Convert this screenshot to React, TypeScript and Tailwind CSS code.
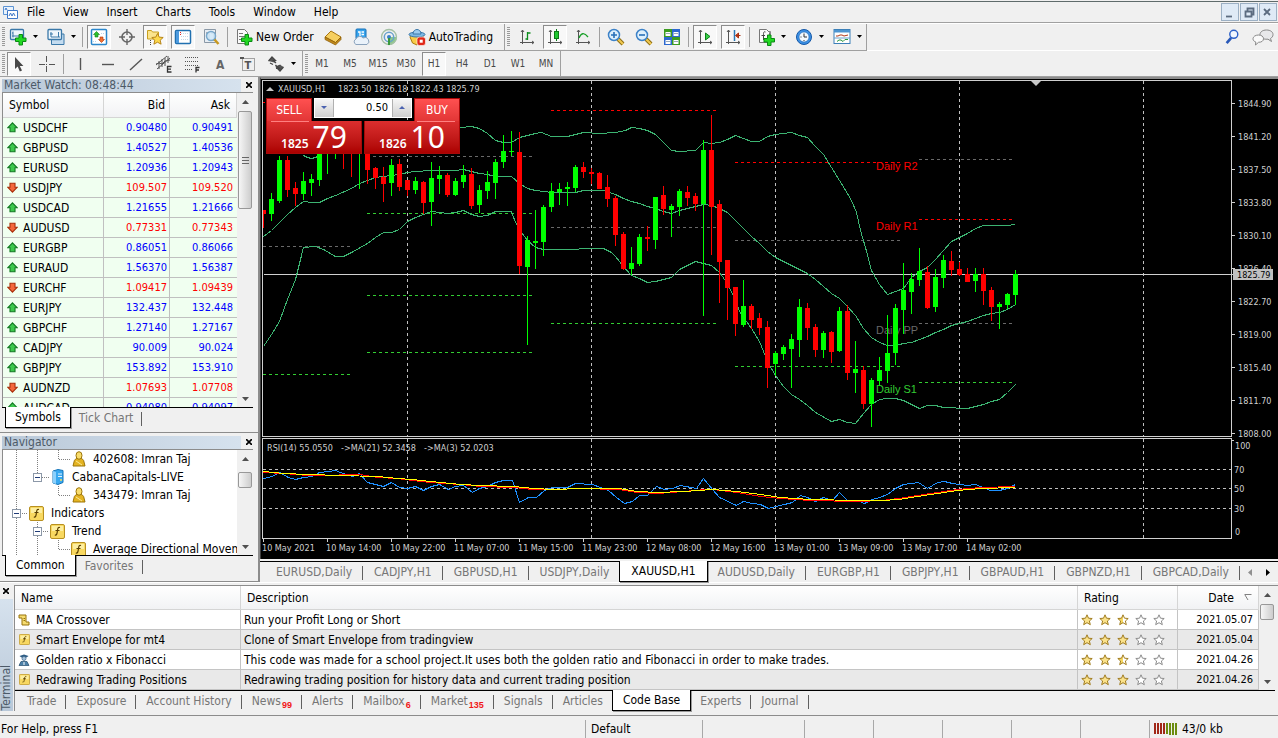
import type { ReactNode } from "react";

/* ---------- chart data ---------- */

type Candle = [up: number, bodyTop: number, bodyBottom: number, high: number, low: number];

const candles: Candle[] = [
  [0, 210, 214, 210, 228], [1, 199, 214, 193, 221], [1, 160, 201, 156, 203], [0, 160, 190, 156, 197],
  [0, 188, 194, 182, 206], [1, 181, 194, 172, 200], [1, 179, 183, 174, 196], [1, 150, 180, 150, 186],
  [1, 140, 150, 140, 174], [1, 140, 150, 140, 159], [0, 140, 150, 140, 169], [0, 140, 150, 140, 177],
  [1, 140, 150, 140, 189], [0, 150, 170, 150, 184], [0, 168, 178, 167, 189], [0, 177, 184, 167, 202],
  [1, 165, 183, 159, 196], [0, 164, 187, 159, 191], [0, 180, 190, 180, 196], [1, 181, 190, 177, 194],
  [0, 182, 203, 181, 214], [1, 178, 202, 162, 226], [1, 175, 179, 166, 194], [0, 175, 195, 173, 197],
  [1, 181, 195, 178, 196], [1, 175, 182, 165, 188], [0, 174, 206, 168, 209], [1, 190, 205, 185, 213],
  [1, 182, 191, 171, 199], [1, 162, 183, 159, 199], [1, 151, 162, 135, 168], [1, 151, 152, 131, 156],
  [0, 152, 266, 132, 274], [1, 240, 267, 236, 345], [1, 241, 243, 210, 269], [1, 207, 242, 205, 256],
  [1, 191, 207, 183, 212], [1, 189, 192, 183, 205], [1, 187, 189, 182, 206], [1, 167, 188, 165, 192],
  [0, 167, 172, 162, 178], [0, 172, 174, 168, 184], [0, 173, 189, 172, 189], [0, 187, 199, 175, 207],
  [0, 198, 235, 196, 246], [0, 234, 269, 232, 270], [1, 263, 269, 247, 275], [1, 237, 264, 234, 266],
  [0, 237, 239, 226, 251], [1, 197, 240, 197, 249], [0, 195, 209, 186, 215], [1, 206, 210, 204, 237],
  [1, 191, 207, 189, 216], [0, 192, 198, 186, 206], [0, 196, 204, 193, 211], [1, 150, 204, 140, 316],
  [0, 150, 207, 115, 255], [0, 204, 262, 200, 303], [0, 260, 288, 260, 320], [0, 287, 324, 287, 336],
  [1, 306, 325, 280, 327], [0, 306, 320, 304, 329], [0, 318, 328, 313, 335], [0, 327, 368, 321, 388],
  [1, 353, 364, 351, 376], [1, 347, 354, 345, 360], [1, 339, 349, 334, 388], [1, 307, 340, 299, 357],
  [0, 308, 328, 303, 340], [0, 327, 350, 324, 357], [1, 333, 350, 331, 358], [0, 332, 352, 331, 363],
  [1, 311, 351, 307, 352], [0, 311, 373, 305, 380], [1, 369, 373, 341, 393], [0, 370, 404, 366, 409],
  [1, 380, 404, 378, 427], [1, 370, 381, 357, 386], [1, 353, 371, 315, 383], [1, 308, 353, 304, 365],
  [1, 290, 310, 263, 334], [1, 279, 292, 273, 314], [1, 271, 280, 248, 286], [0, 272, 308, 266, 309],
  [1, 277, 307, 269, 312], [1, 260, 278, 255, 288], [0, 261, 270, 251, 276], [0, 269, 275, 262, 276],
  [0, 274, 282, 268, 282], [1, 274, 281, 268, 292], [0, 274, 291, 268, 305], [0, 290, 307, 287, 321],
  [1, 304, 307, 302, 329], [1, 294, 305, 293, 309], [1, 274, 295, 270, 305],
];

const bandHidden = "303,155 307,157 311,158 315,157 319,155";
const bandUpper =
  "455,128 461,127 471,126 479,128 487,133 495,140 503,142 511,142 519,137 527,135 535,133 541,132 551,136 567,136 583,132 599,133 615,132 625,130 631,127 639,128 647,130 655,134 663,142 671,150 679,151 695,150 703,142 711,143 719,142 727,139 735,135 743,138 751,141 759,141 767,136 775,134 791,132 799,135 807,137 815,146 823,154 831,167 839,180 847,193 851,200 856,212 860,230 865,247 871,270 879,284 887,294 895,291 903,288 911,277 919,271 927,267 935,259 943,250 951,241 959,237 967,233 975,228 983,225 1007,225 1015,224";
const bandMiddle =
  "263,236 271,230 279,222 287,214 295,207 303,201 311,202 319,202 327,198 335,195 351,188 359,183 367,180 375,177 383,176 391,175 399,174 407,172 415,171 431,170 455,170 463,169 471,171 479,173 487,174 495,176 511,176 519,183 527,188 535,190 543,191 551,192 575,192 583,190 603,190 615,194 623,198 631,201 639,203 647,206 655,208 663,211 671,213 679,210 695,206 703,204 711,205 719,208 727,212 735,220 743,228 751,236 759,243 767,251 775,257 783,261 791,265 799,269 807,273 815,279 823,286 831,293 839,298 847,306 855,315 863,328 871,337 879,342 887,345 895,345 903,343 911,342 919,339 927,336 935,332 943,329 951,325 959,323 967,321 975,318 983,315 991,313 999,312 1007,309 1015,304";
const bandLower =
  "263,346 271,334 279,321 287,299 295,279 303,247 315,246 323,249 335,256 343,256 351,252 367,243 375,237 383,232 391,232 399,229 407,221 415,217 423,214 431,211 447,213 455,212 463,210 471,214 479,216 487,215 495,211 511,211 515,222 521,232 527,240 535,247 543,249 575,249 583,248 603,248 611,252 615,256 623,266 631,275 639,278 647,282 655,281 671,277 679,269 695,261 711,265 719,272 727,283 735,300 739,311 751,328 759,341 767,361 775,375 783,386 791,394 799,399 807,405 815,412 831,421 839,419 847,422 855,423 863,413 871,404 879,399 887,398 895,398 903,400 911,404 919,408 927,405 935,405 943,407 967,408 975,406 983,404 991,401 999,399 1007,392 1015,384";

const rsi =
  "263,478 272,476 279,472 288,477 295,479 303,477 312,476 319,472 328,471 335,470 340,472 352,476 359,473 367,482 375,484 383,486 391,482 399,487 407,488 415,486 423,490 431,486 439,484 448,489 455,486 463,485 472,492 479,488 487,486 495,482 503,480 512,480 519,502 528,497 536,497 544,490 552,487 567,487 575,483 592,484 608,490 616,497 624,503 632,501 639,495 647,495 656,486 664,489 672,488 680,485 696,488 703,478 712,489 719,497 736,505 743,501 752,503 760,504 768,508 775,506 784,504 792,502 800,495 807,497 815,501 823,497 832,500 839,492 847,500 857,500 864,503 872,499 879,497 887,494 895,488 903,484 918,482 927,488 937,482 944,481 952,483 967,485 975,484 990,490 999,490 1007,488 1015,484";
const maSlow =
  "263,471 283,473 308,474 340,475 377,476 397,478 412,479 430,481 460,484 480,485 513,486 533,488 553,489 580,488 618,488 637,491 657,492 683,491 712,489 737,491 760,494 780,497 810,499 857,500 882,500 898,499 917,496 937,493 957,490 980,488 1015,487";
const maFast =
  "263,472 283,473 308,475 332,475 345,474 360,474 377,477 397,478 412,480 430,482 460,484 480,486 513,487 533,489 553,489 580,488 618,489 637,492 657,493 683,491 705,489 712,489 737,492 760,496 780,498 810,500 857,501 882,500 898,498 917,495 937,492 957,489 980,487 1015,486";

type Level = [x1: number, x2: number, y: number, color: string];
const RED = "#ff0000", LIME = "#32cd32", DIM = "#696969";
const levels: Level[] = [
  [263, 265, 102, RED], [551, 716, 110, RED], [735, 900, 162, RED], [919, 1013, 219, RED],
  [919, 1013, 159, DIM], [263, 350, 246, DIM], [367, 532, 156, DIM], [551, 716, 227, DIM],
  [735, 900, 240, DIM], [919, 1013, 323, DIM], [263, 350, 374, LIME], [367, 532, 213, LIME],
  [367, 532, 295, LIME], [367, 532, 352, LIME], [551, 716, 323, LIME], [735, 900, 366, LIME],
  [919, 1013, 382, LIME],
];

const prices = ["1844.90", "1841.20", "1837.50", "1833.80", "1830.10", "1826.40", "1822.70", "1819.00", "1815.40", "1811.70", "1808.00"];
const times = ["10 May 2021", "10 May 14:00", "10 May 22:00", "11 May 07:00", "11 May 15:00", "11 May 23:00", "12 May 08:00", "12 May 16:00", "13 May 01:00", "13 May 09:00", "13 May 17:00", "14 May 02:00"];
const pivots: [string, number, string][] = [["Daily R2", 170, RED], ["Daily R1", 230, RED], ["Daily PP", 334, DIM], ["Daily S1", 393, LIME]];

function Chart() {
  return (
    <svg viewBox="261 79 1017 480" width="1017" height="480" className="block shrink-0" fontFamily="DejaVu Sans Condensed, Tahoma, sans-serif" fontSize="9" fill="#d0d0d0" role="img" aria-label="XAUUSD H1 chart">
      <g shapeRendering="crispEdges" fill="none" stroke="#c0c0c0">
        {[407, 591, 775, 959, 1143].map((x) => (
          <g key={x} strokeDasharray="3 3">
            <path d={`M${x + 0.5} 81V436`} />
            <path d={`M${x + 0.5} 439V538`} />
          </g>
        ))}
        {levels.map(([x1, x2, y, c]) => (
          <path key={`${x1}-${y}`} d={`M${x1} ${y + 0.5}H${x2}`} stroke={c} strokeDasharray="3 3" />
        ))}
        <path d="M263 469.5H1232M263 488.5H1232M263 508.5H1232" strokeDasharray="3 3" />
      </g>
      <g fontFamily="Liberation Sans, Arial, sans-serif" fontSize="11">
        {pivots.map(([t, y, c]) => (
          <text key={t} x="876" y={y} fill={c}>{t}</text>
        ))}
      </g>
      <g shapeRendering="crispEdges" fill="none" strokeWidth="1" transform="translate(0.5 0.5)">
        <path d="M263 274H1232" stroke="#d0d0d0" />
        <g stroke="#3cb371">
          <polyline points={bandHidden} />
          <polyline points={bandUpper} />
          <polyline points={bandMiddle} />
          <polyline points={bandLower} />
        </g>
      </g>
      <g shapeRendering="crispEdges">
        {candles.map(([up, t, b, h, l], i) => (
          <g key={i} fill={up ? "#00ff00" : "#ff0000"}>
            <rect x={263 + i * 8} y={h} width="1" height={l - h} />
            <rect x={i ? 261 + i * 8 : 263} y={t} width={i ? 5 : 3} height={Math.max(1, b - t)} />
          </g>
        ))}
      </g>
      <g fill="none" shapeRendering="crispEdges" transform="translate(0.5 0.5)">
        <polyline points={rsi} stroke="#1e90ff" />
        <polyline points={maFast} stroke="#ff0000" />
        <polyline points={maSlow} stroke="#ffff00" />
      </g>
      <g shapeRendering="crispEdges" fill="none" stroke="#d0d0d0">
        <path d="M262.5 80.5H1231.5V436.5H262.5ZM262.5 438.5H1231.5V538.5H262.5Z" />
        {prices.map((p, i) => <path key={p} d={`M1232 ${103.5 + i * 33}h3`} />)}
        {times.map((t, i) => <path key={t} d={`M${263.5 + i * 64} 539v3`} />)}
        <path d="M1232 440.5h2" />
      </g>
      <path d="M1031 81h10l-5 5z" fill="#c8c8c8" />
      <path d="M266 91l4-4 4 4z" fill="#c8c8c8" />
      <text y="92"><tspan x="278">XAUUSD,H1</tspan><tspan x="338">1823.50 1826.18 1822.43 1825.79</tspan></text>
      <text y="451"><tspan x="267">RSI(14) 55.0550</tspan><tspan x="341">-&gt;MA(21) 52.3458</tspan><tspan x="424">-&gt;MA(3) 52.0203</tspan></text>
      {prices.map((p, i) => <text key={p} x="1238" y={107 + i * 33}>{p}</text>)}
      <rect x="1233" y="269" width="40" height="11" fill="#c0c0c0" />
      <text x="1237" y="278" fill="#000">1825.79</text>
      <text x="1235" y="449">100</text>
      <text x="1234" y="473">70</text>
      <text x="1234" y="492">50</text>
      <text x="1234" y="512">30</text>
      <text x="1235" y="535">0</text>
      {times.map((t, i) => <text key={t} x={262 + i * 64} y="551">{t}</text>)}
    </svg>
  );
}

function TradePanel() {
  const red = "border border-[#a80808] text-white";
  return (
    <div className="absolute left-[5px] top-[19px] w-[194px]">
      <div className="flex justify-between">
        <button className={`${red} h-[23px] w-[46px] border-b-0 bg-linear-to-b from-[#ff5050] to-[#e23636]`}>SELL</button>
        <div className="flex h-5 w-[98px] border border-white bg-white">
          <button aria-label="Decrease volume" className="flex w-[18px] items-center justify-center bg-linear-to-b from-[#f6f6f6] to-[#cfcfcf]"><svg width="6" height="4"><path d="M0 0h6L3 3z" fill="#4b62b0" /></svg></button>
          <input aria-label="Volume" defaultValue="0.50" className="min-w-0 flex-1 border-x border-[#b0b0b0] bg-white pr-1 text-right text-[11px] text-black" />
          <button aria-label="Increase volume" className="flex w-[18px] items-center justify-center bg-linear-to-b from-[#f6f6f6] to-[#cfcfcf]"><svg width="6" height="4"><path d="M0 3h6L3 0z" fill="#4b62b0" /></svg></button>
        </div>
        <button className={`${red} h-[23px] w-[46px] border-b-0 bg-linear-to-b from-[#ff5050] to-[#e23636]`}>BUY</button>
      </div>
      <div className="flex justify-between font-['Noto_Sans',sans-serif]">
        {[["1825", "79"], ["1826", "10"]].map(([a, b], i) => (
          <button key={a} className={`${red} relative flex h-[33px] w-24 items-end justify-center gap-1 border-t-0 bg-linear-to-b from-[#dc2e2e] to-[#ac0000]`}>
            <span className={i ? "absolute right-1 top-0 h-px w-[38px] bg-[#ff8080]" : "absolute left-1 top-0 h-px w-[38px] bg-[#ff8080]"} />
            <span className="text-xs leading-[18px] font-semibold">{a}</span>
            <span className="text-[30px] leading-[32px]">{b}</span>
          </button>
        ))}
      </div>
    </div>
  );
}

/* ---------- icons ---------- */

function Ico({ children, s = 18 }: { children: ReactNode; s?: number }) {
  return <svg width={s} height={s} viewBox="0 0 18 18" fill="none" aria-hidden="true" className="shrink-0">{children}</svg>;
}
const Plus = ({ x = 0, y = 0 }) => (
  <path transform={`translate(${x} ${y})`} d="M4 .5h3.500v3.500h3.500v3.500h-3.500v3.500H4V7.500H.5V4H4z" fill="#22d822" stroke="#0a8a14" />
);
const Axes = () => <path d="M4.500 2v14M2 14.500h14M3 4l1.500-2L6 4M14 13l2 1.500-2 1.500" stroke="#555" />;
const Handle = () => (
  <>
    <path d="M11 11l5 5" stroke="#8a6a10" strokeWidth="4" />
    <path d="M11 11l5 5" stroke="#f0c850" strokeWidth="2.200" />
  </>
);
const Lens = () => <circle cx="7" cy="7" r="5.500" fill="#dff0fc" stroke="#3c82c8" strokeWidth="1.500" />;

const I = {
  newChart: <Ico><rect x="1.500" y="1.500" width="13" height="10" rx="1" fill="#eef6fc" stroke="#3a78a8" strokeWidth="1.300" /><path d="M4 3.500v6M3 5h1M3 8h9" stroke="#3a78a8" /><Plus x={6} y={6} /></Ico>,
  profiles: <Ico><path d="M4.500 6h12.500v10.500H4.500z" fill="#c4dcf0" stroke="#3a78a8" /><rect x="1" y="1.500" width="13.500" height="10" rx="1" fill="#eef6fc" stroke="#3a78a8" strokeWidth="1.300" /><path d="M4 4v5M11.500 4v5M3 6h3M4 9h9" stroke="#3a78a8" /></Ico>,
  market: <Ico><rect x="1.500" y="1.500" width="15" height="15" rx="1" fill="#fff" stroke="#2a86cc" strokeWidth="1.500" /><path d="M6.500 3.500l3 3H8v2.500H5V6.500H3.500z" fill="#2cc02c" stroke="#128018" strokeWidth=".6" /><path d="M11.500 14.500l3-3H13V9h-3v2.500H8.500z" fill="#f07030" stroke="#b03008" strokeWidth=".6" /><path d="M11 5.500h4M3 13.500h4" stroke="#b8d4ec" strokeDasharray="1 1" /></Ico>,
  cross: <Ico><circle cx="9" cy="9" r="5" stroke="#666" strokeWidth="1.600" /><path d="M9 1v6M9 11v6M1 9h6M11 9h6" stroke="#666" strokeWidth="1.400" /></Ico>,
  nav: <Ico><path d="M1.500 2.500h4l1 1.500h6v7h-11z" fill="#fbe48c" stroke="#c8a020" /><path d="M4.500 12v5" stroke="#444" strokeDasharray="1 1" /><path d="M11.500 5.500l1.700 3.600 4 .4-3 2.700.9 4-3.600-2-3.600 2 .9-4-3-2.700 4-.4z" fill="#fcd84c" stroke="#b07c10" strokeWidth=".9" /></Ico>,
  term: <Ico><rect x="1.500" y="2.500" width="15" height="13" rx="1" fill="#fff" stroke="#2070b0" strokeWidth="1.500" /><path d="M2 3h3v12H2z" fill="#4c9ade" /><path d="M7 5.500h8M7 8.500h8M7 11.500h8" stroke="#c4d8e8" strokeDasharray="1 1" /><path d="M6.500 4v3" stroke="#e02020" strokeDasharray="1 1" /></Ico>,
  tester: <Ico><path d="M2.500 1.500h11v13h-11z" fill="#e8eef4" stroke="#8a98a6" /><path d="M4 5h3v6M10 3v3M12 4v9" stroke="#667" /><circle cx="9" cy="8" r="4.500" fill="#d4eafa" fillOpacity=".9" stroke="#78a8cc" strokeWidth="1.500" /><path d="M12.500 11.500l4 4.500" stroke="#c89820" strokeWidth="2.500" /></Ico>,
  order: <Ico><path d="M2.500 1.500h7l3 3v11h-10z" fill="#fafafa" stroke="#777" /><path d="M4 5.500h4M4 8.500h6M4 11.500h3" stroke="#777" /><Plus x={6} y={6} /></Ico>,
  meta: <Ico><path d="M1 9l6-6 10 6-5.500 5.500z" fill="#f6cf60" stroke="#a87410" /><path d="M1 9v2.500l10.500 5.500 5.500-5.500V9l-5.500 5.500z" fill="#c08818" stroke="#8a5c08" strokeWidth=".7" /></Ico>,
  cloud: <Ico><rect x="4" y="1" width="10" height="10" rx="1" fill="#38a4ec" stroke="#1470b8" /><path d="M6 4h2v5M9.500 4H12M9.500 6.500H12" stroke="#fff" strokeWidth="1.300" /><path d="M4 16.500a3 3 0 010-5.500 4 4 0 017-1 3.300 3.300 0 014 6.500z" fill="#eaf2fa" stroke="#8aa2bc" /></Ico>,
  signal: <Ico><path d="M9 9v8A8 8 0 0017 9z" fill="#8cc88c" /><circle cx="9" cy="9" r="7.500" stroke="#a4c0a4" strokeWidth="1.300" /><circle cx="9" cy="9" r="4.700" stroke="#68a0cc" strokeWidth="1.500" /><circle cx="9" cy="9" r="2" fill="#3880c8" /><path d="M9 10v7" stroke="#38983c" strokeWidth="2" /></Ico>,
  auto: <Ico><path d="M2 9l2.500 6 4.500 2 6-6V7H3z" fill="#f8cc48" stroke="#a87c10" /><ellipse cx="9" cy="6.500" rx="8" ry="2.500" fill="#7cb8e4" stroke="#3c78a8" /><path d="M5 6c0-6 8-6 8 0z" fill="#9cccf0" stroke="#3c78a8" /><rect x="9" y="9" width="8.500" height="8.500" rx="2.500" fill="#e02818" stroke="#fff" strokeWidth=".6" /><rect x="11.700" y="11.700" width="3" height="3" fill="#fff" /></Ico>,
  bars: <Ico><Axes /><path d="M9.500 4v8M7.500 11h2M9.500 5h3" stroke="#0c8c1c" strokeWidth="1.300" /></Ico>,
  candle: <Ico><Axes /><path d="M10.500 1v12" stroke="#0c7c18" /><rect x="8.500" y="3.500" width="4" height="7" fill="#20c830" stroke="#0c7c18" /></Ico>,
  line: <Ico><Axes /><path d="M5 10c2-5 5-6 9-1" stroke="#18a028" strokeWidth="1.300" /></Ico>,
  zin: <Ico><Handle /><Lens /><path d="M4 7h6M7 4v6" stroke="#2870b8" strokeWidth="1.600" /></Ico>,
  zout: <Ico><Handle /><Lens /><path d="M4 7h6" stroke="#2870b8" strokeWidth="1.600" /></Ico>,
  tile: <Ico><path d="M1 1h8v8H1zM9 9h8v8H9z" fill="#3c9c20" /><path d="M9 1h8v8H9zM1 9h8v8H1z" fill="#2c68d0" /><path d="M2.500 4h5v4h-5zM10.500 4h5v4h-5zM2.500 12h5v4h-5zM10.500 12h5v4h-5z" fill="#fff" /><path d="M3 5.500h4M11 5.500h4M3 13.500h4M11 13.500h4" stroke="#98a8b8" /></Ico>,
  scroll: <Ico><Axes /><path d="M9.500 5v7l4.500-3.500z" fill="#38d048" stroke="#0c8018" /></Ico>,
  shift: <Ico><Axes /><path d="M10.500 2v11" stroke="#2878b8" strokeWidth="1.500" /><path d="M16.500 7.500H12M14.500 5l-3 2.500 3 2.500z" stroke="#a83010" fill="#d84820" /></Ico>,
  ind: <Ico><path d="M4.500 3.500h9v11h-9z" fill="#ddd" stroke="#888" /><path d="M2.500 1.500h7l3 3v10h-10z" fill="#fafafa" stroke="#777" /><path d="M8.500 4C6.500 3 6.500 5 6.500 7v5M4.500 7.500H8" stroke="#444" /><Plus x={6.500} y={6.500} /></Ico>,
  clock: <Ico><circle cx="9" cy="9" r="7.500" fill="#3c90e4" stroke="#1458a8" /><circle cx="9" cy="9" r="5" fill="#f4faff" stroke="#1c64b4" strokeWidth=".6" /><path d="M9 5.500V9h3M5.500 9h1M9 12v1" stroke="#333" /></Ico>,
  tmpl: <Ico><rect x="1" y="1.500" width="16" height="14" fill="#fff" stroke="#3c80b8" /><path d="M1 2h16v2.500H1z" fill="#4c94d0" /><path d="M3 8h2l2-1h2l2 1 4-1" stroke="#b03818" /><path d="M1 10h16" stroke="#6ca0cc" /><path d="M4 13.500l2-1.500h2l2 1.500 2-2h3" stroke="#28983c" /></Ico>,
  cursor: <Ico><path d="M5 2v12l2.700-2.500L9.800 16.500l2.200-1-2.200-4.500h3.600z" fill="#484848" /></Ico>,
  hair: <Ico><path d="M8.500 1v6M8.500 11v6M1 9.500h6M11 9.500h6M8.500 9v1" stroke="#555" /></Ico>,
  vline: <Ico><path d="M9.500 3v12" stroke="#555" strokeWidth="1.400" /></Ico>,
  hline: <Ico><path d="M3 9.500h12" stroke="#555" strokeWidth="1.400" /></Ico>,
  trend: <Ico><path d="M3 15L15 4" stroke="#555" strokeWidth="1.400" /></Ico>,
  channel: <Ico><path d="M1 10L12 1M2 14L15 3M4 6v8M7 4v8M10 3v8M13 1v7M1 9l3-1 3 1 3-3 5-1" stroke="#555" /><path d="M16.500 11.500h-4v5.500h4M12.500 14.200h3.500" stroke="#333" strokeWidth="1.300" /></Ico>,
  fib: <Ico><path d="M2 2.500h14M2 6.500h14M2 10.500h14M2 14.500h8" stroke="#555" strokeDasharray="1 1" /><path d="M16.500 12.500h-3.500v5M13 15h3" stroke="#333" strokeWidth="1.300" /></Ico>,
  text: <Ico><text x="5" y="14" fontSize="12" fontWeight="bold" fill="#666">A</text></Ico>,
  label: <Ico><rect x="3.500" y="3.500" width="12" height="12" stroke="#555" strokeDasharray="1 1" /><path d="M1 2h4v2H1z" fill="#555" /><text x="5.500" y="14" fontSize="11" fontWeight="bold" fill="#555">T</text></Ico>,
  arrows: <Ico><path d="M1.500 6L5 2l3.500 3.500H6.500L9 8M3 8l3 1.500M9 13.500h2.500L8.500 10M16.500 12L13 16l-2.500-2.500h2L11 11l2.500-1" fill="#555" stroke="#444" strokeWidth="1.200" /></Ico>,
  search: <Ico s={16}><path d="M8 10l-5 6" stroke="#2858b8" strokeWidth="3" /><circle cx="11" cy="6" r="4.500" fill="#f0f6fe" stroke="#2c60c8" strokeWidth="1.600" /></Ico>,
  chat: <svg width="22" height="18" fill="none" aria-hidden="true"><path d="M14.500 2c4 0 6.500 2 6.500 4.500 0 2-1 3-2.500 4l1 3-3.500-2.300C10 11.500 8 9.500 8 6.500 8 4 10.500 2 14.500 2z" fill="#e8e8ea" stroke="#888" /><path d="M6.500 7c3 0 5 1.600 5 3.700 0 2.300-2 3.600-5 3.600L3.500 17l.3-3C2 13.400 1 12.300 1 10.700 1 8.600 3.500 7 6.500 7z" fill="#fafafa" stroke="#888" /></svg>,
};

function Updown({ up }: { up: boolean }) {
  return (
    <svg width="11" height="11" viewBox="0 0 11 11" className="shrink-0" aria-label={up ? "up" : "down"}>
      {up ? <path d="M5.500 .8l4.700 5H8v4H3v-4H.8z" fill="#3cc84c" stroke="#147a24" strokeWidth="1.100" /> : <path d="M5.500 10.200l4.700-5H8v-4H3v4H.8z" fill="#f4683c" stroke="#a8300c" strokeWidth="1.100" />}
    </svg>
  );
}
const FIcon = ({ s = 15 }: { s?: number }) => (
  <svg width={s} height={s} viewBox="0 0 15 15" aria-hidden="true" className="shrink-0">
    <rect x=".5" y=".5" width="14" height="14" rx="1.500" fill="#f8d860" stroke="#b89020" />
    <path d="M2 2h11v5H2z" fill="#fdeea0" />
    <path d="M10 3.500c-2-.8-2.300 1-2.600 3.500s-.6 4.500-2.600 4M5.500 6.500h4" fill="none" stroke="#5c4000" strokeWidth="1.200" />
  </svg>
);
const UserIcon = () => (
  <svg width="14" height="16" viewBox="0 0 14 16" aria-hidden="true" className="shrink-0">
    <path d="M2 11c0-2 2-4 5-4s5 2 5 4l1 4H1z" fill="#e4b422" stroke="#9c7408" />
    <ellipse cx="7" cy="4.500" rx="3" ry="3.800" fill="#f8dc6c" stroke="#9c7408" />
    <path d="M4 10l6 4" stroke="#fbe898" />
  </svg>
);
const ServerIcon = () => (
  <svg width="14" height="16" viewBox="0 0 14 16" aria-hidden="true" className="shrink-0">
    <path d="M2 2l5-1.500 5 1v12L7 15.500 2 14z" fill="#38a8f0" stroke="#1474b8" />
    <path d="M2 2l3 1v12l-3-1z" fill="#8cd0fc" />
    <path d="M7 5h4M7 7.500h4" stroke="#e0f4ff" />
    <path d="M9 11h2" stroke="#f8e060" strokeWidth="1.500" />
  </svg>
);
const ScriptIcon = () => (
  <svg width="12" height="12" viewBox="0 0 12 12" aria-hidden="true" className="shrink-0">
    <path d="M1 1h7v7h3v3H4V4H1z" fill="#f6dc70" stroke="#96720c" />
    <path d="M5.500 4.500H7M5.500 6.500H7" stroke="#96720c" />
  </svg>
);
const ExpertIcon = () => (
  <svg width="12" height="12" viewBox="0 0 12 12" aria-hidden="true" className="shrink-0">
    <path d="M1.500 2L6 .5 10.500 2 8.500 3.500h-5z" fill="#2c5c84" />
    <circle cx="6" cy="4.500" r="2" fill="#a8c4dc" stroke="#3c6488" strokeWidth=".7" />
    <path d="M1 11.500l2-4h6l2 4z" fill="#4c80a8" stroke="#244c6c" strokeWidth=".7" />
    <path d="M6 8v3" stroke="#fff" />
  </svg>
);

/* ---------- shared parts ---------- */

function Btn({ icon, label, on, text }: { icon?: ReactNode; label: string; on?: boolean; text?: boolean }) {
  return (
    <button aria-label={label} className={`flex h-6 shrink-0 items-center justify-center border ${text ? "gap-[3px] px-[2px]" : "w-6"} ${on ? "border-r-white border-b-white border-t-[#8c8c8c] border-l-[#8c8c8c] bg-[#f8f8f8]" : "border-transparent"}`}>
      {icon}
      {text && <span>{label}</span>}
    </button>
  );
}
const Drop = ({ label }: { label: string }) => (
  <button aria-label={label} className="-ml-1 flex w-2.5 shrink-0 items-center justify-center"><svg width="5" height="3"><path d="M0 0h5L2.500 3z" /></svg></button>
);
const Sep = () => <span className="h-5 w-px shrink-0 bg-[#a0a0a0]" />;
const Grip = () => (
  <svg width="4" height="20" shapeRendering="crispEdges" className="mx-px shrink-0" aria-hidden="true"><path d="M2 0V20" stroke="#999" strokeWidth="3" strokeDasharray="1 1" /></svg>
);
const Close = () => (
  <button aria-label="Close" className="flex h-3 w-3 items-center justify-center"><svg width="6" height="6"><path d="M0 0l6 6M6 0L0 6" stroke="#000" strokeWidth="1.600" /></svg></button>
);

function Scrollbar({ thumb }: { thumb: string }) {
  return (
    <div className="flex w-4 shrink-0 flex-col items-center bg-[#f0f0f0]" aria-hidden="true">
      <div className="flex h-[18px] items-center"><svg width="7" height="4"><path d="M0 4h7L3.500 0z" fill="#505050" /></svg></div>
      <div className={`flex w-3.5 items-center justify-center rounded-xs border border-[#989898] bg-linear-to-r from-[#f6f6f6] to-[#cdcdcd] ${thumb}`}>
        <span className="h-[7px] w-[7px] border-y border-[#666] bg-[linear-gradient(#0000_2px,#666_2px,#666_3px,#0000_3px)]" />
      </div>
      <div className="mt-auto flex h-4 items-center"><svg width="7" height="4"><path d="M0 0h7L3.500 4z" fill="#505050" /></svg></div>
    </div>
  );
}

function PanelTitle({ children }: { children: ReactNode }) {
  return (
    <div className="flex h-[14px] items-center gap-[2px]">
      <h2 className="flex h-[13px] w-[239px] items-center bg-linear-to-r from-[#b9c8d8] to-[#d6e2ee] px-[2px] text-[#4c5a68]">{children}</h2>
      <Close />
    </div>
  );
}

function Tabs({ items, active, pad }: { items: [string, string?][]; active: string; pad: string }) {
  return (
    <div className="flex h-5" role="tablist">
      {items.map(([t, n], i) => {
        const on = t === active;
        const nextOn = items[i + 1]?.[0] === active;
        return (
          <button key={t} role="tab" aria-selected={on} className={`relative flex shrink-0 items-center ${on ? "-mx-px -mt-px h-[21px] border border-t-0 border-black bg-white shadow-[1px_1px_0_#999]" : "text-[#767676]"} ${pad}`}>
            {t}
            {n && <sub className="bottom-[-4px] pl-px font-['Liberation_Sans',Arial,sans-serif] text-[9px] font-bold text-[#f01818]">{n}</sub>}
            {!on && !nextOn && <span className="absolute right-0 top-1 h-3.5 w-px bg-[#606060]" />}
          </button>
        );
      })}
    </div>
  );
}

/* ---------- left column ---------- */

const quotes: [string, string, string, boolean][] = [
  ["USDCHF", "0.90480", "0.90491", true], ["GBPUSD", "1.40527", "1.40536", true], ["EURUSD", "1.20936", "1.20943", true],
  ["USDJPY", "109.507", "109.520", false], ["USDCAD", "1.21655", "1.21666", true], ["AUDUSD", "0.77331", "0.77343", false],
  ["EURGBP", "0.86051", "0.86066", true], ["EURAUD", "1.56370", "1.56387", true], ["EURCHF", "1.09417", "1.09439", false],
  ["EURJPY", "132.437", "132.448", true], ["GBPCHF", "1.27140", "1.27167", true], ["CADJPY", "90.009", "90.024", true],
  ["GBPJPY", "153.892", "153.910", true], ["AUDNZD", "1.07693", "1.07708", false], ["AUDCAD", "0.94080", "0.94097", true],
];

function MarketWatch() {
  return (
    <section className="pl-[2px] pt-px">
      <PanelTitle>Market Watch: 08:48:44</PanelTitle>
      <div className="mr-[5px] flex h-[315px] overflow-hidden border-t border-l border-[#8c8c8c] bg-white">
        <div className="min-w-0 flex-1">
          <table className="w-full table-fixed border-separate border-spacing-0">
            <colgroup><col className="w-[101px]" /><col className="w-[66px]" /><col /></colgroup>
            <thead>
              <tr className="h-[25px] bg-linear-to-b from-white to-[#f1f2f4]">
                <th className="border-r border-b border-[#d5d5d5] pl-1.5 text-left font-normal">Symbol</th>
                <th className="border-r border-b border-[#d5d5d5] pr-1 text-right font-normal">Bid</th>
                <th className="border-r border-b border-[#d5d5d5] pr-1.5 text-right font-normal">Ask</th>
              </tr>
            </thead>
            <tbody>
              {quotes.map(([s, b, a, up]) => (
                <tr key={s} className={`h-5 bg-[#f0fff0] ${up ? "text-[#0000ff]" : "text-[#ff0000]"}`}>
                  <td className="border-r border-b border-[#c0c0c0] p-0 pl-1 text-black"><span className="flex items-center gap-[5px] leading-[18px]"><Updown up={up} />{s}</span></td>
                  <td className="border-r border-b border-[#c0c0c0] p-0 pr-[2px] text-right text-[11px] leading-[18px]">{b}</td>
                  <td className="border-b border-[#c0c0c0] p-0 pr-1 text-right text-[11px] leading-[18px]">{a}</td>
                </tr>
              ))}
            </tbody>
          </table>
        </div>
        <Scrollbar thumb="h-[98px]" />
      </div>
      <div className="mr-[5px] border-t border-black pl-1"><Tabs items={[["Symbols"], ["Tick Chart"]]} active="Symbols" pad="px-[9px]" /></div>
    </section>
  );
}

type Node = { x: number; guide: string; box?: number; icon: ReactNode; text: string };
const tree: Node[] = [
  { x: 69, guide: "M13.500 0V18M34.500 0V18M55.500 0V9.500H67", icon: <UserIcon />, text: "402608: Imran Taj" },
  { x: 48, guide: "M13.500 0V18M34.500 0V9.500H46", box: 34, icon: <ServerIcon />, text: "CabanaCapitals-LIVE" },
  { x: 69, guide: "M13.500 0V18M55.500 0V9.500H67", icon: <UserIcon />, text: "343479: Imran Taj" },
  { x: 26, guide: "M13.500 0V18M13 9.500H25", box: 13, icon: <FIcon />, text: "Indicators" },
  { x: 47, guide: "M13.500 0V18M34.500 0V18M34 9.500H46", box: 34, icon: <FIcon />, text: "Trend" },
  { x: 68, guide: "M13.500 0V18M34.500 0V18M55.500 0V9.500H67", icon: <FIcon />, text: "Average Directional Movement Index" },
];

function Navigator() {
  return (
    <section className="mt-1 border-t border-[#8c8c8c] pl-[2px] pt-[2px]">
      <PanelTitle>Navigator</PanelTitle>
      <div className="mr-[5px] flex h-[106px] overflow-hidden border-t border-l border-[#8c8c8c] bg-white">
        <ul className="min-w-0 flex-1 overflow-hidden">
          {tree.map((n) => (
            <li key={n.text} className="flex h-[18px] items-center whitespace-nowrap">
              <svg width={n.x} height="18" shapeRendering="crispEdges" className="shrink-0" aria-hidden="true">
                <path d={n.guide} fill="none" stroke="#808080" strokeDasharray="1 1" />
                {n.box !== undefined && <g><rect x={n.box - 4 + 0.5} y="5.500" width="8" height="8" fill="#fff" stroke="#8c98a8" /><path d={`M${n.box - 2} 9.500h5`} stroke="#203c78" /></g>}
              </svg>
              {n.icon}
              <span className="pl-[7px]">{n.text}</span>
            </li>
          ))}
        </ul>
        <Scrollbar thumb="mt-1 h-4 *:hidden" />
      </div>
      <div className="mr-[5px] border-t border-black pl-1"><Tabs items={[["Common"], ["Favorites"]]} active="Common" pad="px-[10px]" /></div>
    </section>
  );
}

/* ---------- terminal ---------- */

const code: [ReactNode, string, string, number, string][] = [
  [<ScriptIcon />, "MA Crossover", "Run your Profit Long or Short", 2.5, "2021.05.07"],
  [<FIcon s={11} />, "Smart Envelope for mt4", "Clone of Smart Envelope from tradingview", 3, "2021.05.04"],
  [<ExpertIcon />, "Golden ratio x Fibonacci", "This code was made for a school project.It uses both the golden ratio and Fibonacci in order to make trades.", 2.5, "2021.04.26"],
  [<FIcon s={11} />, "Redrawing Trading Positions", "Redrawing trading position for history data and current trading position", 3, "2021.04.26"],
];

const STAR = "M6 .8l1.500 3.400 3.700.3-2.800 2.500.9 3.700L6 8.700l-3.300 2 .9-3.700L.8 4.500l3.700-.3z";
function Stars({ value }: { value: number }) {
  return (
    <span className="flex gap-1.5" role="img" aria-label={`${value} of 5`}>
      {[0, 1, 2, 3, 4].map((i) => (
        <svg key={i} width="12" height="12" aria-hidden="true">
          <path d={STAR} fill={value >= i + 1 ? "#fbe28a" : "#fff"} />
          {value === i + 0.5 && <path d="M6 .8v7.900l-3.300 2 .9-3.700L.8 4.500l3.700-.3z" fill="#f8d860" />}
          <path d={STAR} fill="none" stroke={value > i ? "#a07c20" : "#8c8c8c"} />
        </svg>
      ))}
    </span>
  );
}

const terminalTabs: [string, string?][] = [["Trade"], ["Exposure"], ["Account History"], ["News", "99"], ["Alerts"], ["Mailbox", "6"], ["Market", "135"], ["Signals"], ["Articles"], ["Code Base"], ["Experts"], ["Journal"]];

function Terminal() {
  const th = "border-r border-b border-[#d5d5d5] p-0 text-left font-normal";
  const td = "border-r border-b border-[#c4c4c4] p-0 leading-[18px] whitespace-nowrap overflow-hidden";
  return (
    <section className="flex border-t border-white pt-[2px] pb-1">
      <div className="flex w-[14px] shrink-0 flex-col">
        <Close />
        <div className="mt-[2px] flex w-[13px] flex-1 items-end bg-linear-to-b from-[#d6e2ee] to-[#b9c8d8]">
          <h2 className="w-[13px] rotate-180 pt-px leading-[13px] text-[#4c5a68] [writing-mode:vertical-rl]">Terminal</h2>
        </div>
      </div>
      <div className="min-w-0 flex-1 border-t border-l border-[#8c8c8c]">
        <div className="flex bg-white">
          <table className="min-w-0 flex-1 table-fixed border-separate border-spacing-0">
            <colgroup><col className="w-[226px]" /><col /><col className="w-[100px]" /><col className="w-[81px]" /></colgroup>
            <thead>
              <tr className="h-6 bg-linear-to-b from-white to-[#f1f2f4]">
                <th className={`${th} pl-1.5`}>Name</th>
                <th className={`${th} pl-1.5`}>Description</th>
                <th className={`${th} pl-1.5`}>Rating</th>
                <th className={th}><span className="flex items-center justify-end gap-2.5 pr-1.5">Date<svg width="8" height="7"><path d="M.5 .5h7M1 1l3 5" stroke="#808080" fill="none" /></svg></span></th>
              </tr>
            </thead>
            <tbody>
              {code.map(([icon, name, desc, stars, date]) => (
                <tr key={name} className="h-5 even:bg-[#e9e9e9]">
                  <td className={td}><span className="flex items-center gap-1.5 pl-[3px]"><span className="flex w-3 justify-center">{icon}</span>{name}</span></td>
                  <td className={`${td} pl-[3px]`}>{desc}</td>
                  <td className={`${td} pl-[3px]`}><Stars value={stars} /></td>
                  <td className={`${td} pr-[5px] text-right text-[11px]`}>{date}</td>
                </tr>
              ))}
            </tbody>
          </table>
          <Scrollbar thumb="h-4 *:hidden" />
          <div className="w-[3px] bg-[#f0f0f0]" />
        </div>
        <div className="mr-[3px] border-t border-black pl-[2px]"><Tabs items={terminalTabs} active="Code Base" pad="px-[10px]" /></div>
      </div>
    </section>
  );
}

/* ---------- page ---------- */

const chartTabs: [string][] = ["EURUSD,Daily", "CADJPY,H1", "GBPUSD,H1", "USDJPY,Daily", "XAUUSD,H1", "AUDUSD,Daily", "EURGBP,H1", "GBPJPY,H1", "GBPAUD,H1", "GBPNZD,H1", "GBPCAD,Daily"].map((t) => [t]);

export default function App() {
  return (
    <div className="flex min-h-screen flex-col overflow-hidden bg-[#f0f0f0] font-['DejaVu_Sans_Condensed',Tahoma,sans-serif] text-xs leading-[14px] text-black">
      <header>
        <div className="mt-px flex h-[22px] items-center border-t border-b border-t-[#5f6b6b] border-b-[#a0a0a0]">
          <svg width="15" height="15" className="ml-[3px]" fill="none" aria-hidden="true"><path d="M.5 1.500h10v8H.5z" fill="#e8f2fc" stroke="#5c94d4" /><path d="M4.500 5.500h10v8h-10z" fill="#fff" stroke="#4078c8" /><path d="M2 5l1-2 1 2M6 11l1.500-3 1.500 3 1.500-3 1.500 3" stroke="#4078c8" /></svg>
          <nav className="flex flex-1">
            {["File", "View", "Insert", "Charts", "Tools", "Window", "Help"].map((m) => <button key={m} className="px-[9px]">{m}</button>)}
          </nav>
          <div className="flex gap-px pr-px">
            {[["Minimize", "M4 11.500h6"], ["Restore", "M4.500 6.500h6v5h-6zM6.500 6V3.500h6v6H11"], ["Close", "M4 4l6 6M10 4l-6 6"]].map(([l, d]) => (
              <button key={l} aria-label={l} className="flex h-[18px] w-[18px] items-center justify-center border border-[#9cb0c4] bg-[#dfeaf6]"><svg width="16" height="15"><path d={d} fill="none" stroke="#5c6c80" strokeWidth="1.800" /></svg></button>
            ))}
          </div>
        </div>
        <div className="flex h-[27px] items-center gap-1 border-t border-white">
          <div className="flex h-[27px] shrink-0 items-center gap-1 border-r border-b border-[#a0a0a0] pr-2">
            <span className="-mr-1 flex"><Grip /></span><Btn icon={I.newChart} label="New Chart" /><Drop label="Chart list" />
            <Btn icon={I.profiles} label="Profiles" /><Drop label="Profile list" /><Sep />
            <Btn icon={I.market} label="Market Watch" on /><Btn icon={I.cross} label="Data Window" /><Btn icon={I.nav} label="Navigator" on /><Btn icon={I.term} label="Terminal" on /><Btn icon={I.tester} label="Strategy Tester" />
            <Sep /><Btn icon={I.order} label="New Order" text /><Btn icon={I.meta} label="MetaEditor" /><Btn icon={I.cloud} label="Virtual Hosting" /><Btn icon={I.signal} label="Signals" /><Btn icon={I.auto} label="AutoTrading" text />
          </div>
          <div className="-ml-1 flex h-[27px] shrink-0 items-center gap-1 border-r border-b border-[#a0a0a0] pr-0.5">
            <Grip /><Btn icon={I.bars} label="Bar Chart" /><Btn icon={I.candle} label="Candlesticks" on /><Btn icon={I.line} label="Line Chart" /><Sep />
            <Btn icon={I.zin} label="Zoom In" /><Btn icon={I.zout} label="Zoom Out" /><Btn icon={I.tile} label="Tile Windows" /><Sep />
            <Btn icon={I.scroll} label="Auto Scroll" on /><Btn icon={I.shift} label="Chart Shift" on /><Sep />
            <Btn icon={I.ind} label="Indicators" /><Drop label="Indicator list" /><Btn icon={I.clock} label="Periods" /><Drop label="Period list" /><Btn icon={I.tmpl} label="Templates" /><Drop label="Template list" />
          </div>
          <div className="ml-auto flex items-center gap-3 pr-1"><button aria-label="Search">{I.search}</button><button aria-label="Chat">{I.chat}</button></div>
        </div>
        <div className="flex h-[26px] items-center border-t border-white">
          <div className="flex h-[26px] shrink-0 items-center gap-1 border-r border-[#a0a0a0] pr-1">
            <span className="-mr-[3px] flex"><Grip /></span><Btn icon={I.cursor} label="Cursor" on /><Btn icon={I.hair} label="Crosshair" /><Sep />
            <Btn icon={I.vline} label="Vertical Line" /><Btn icon={I.hline} label="Horizontal Line" /><Btn icon={I.trend} label="Trendline" /><Btn icon={I.channel} label="Channel" /><Btn icon={I.fib} label="Fibonacci" /><Btn icon={I.text} label="Text" /><Btn icon={I.label} label="Text Label" /><Btn icon={I.arrows} label="Arrows" /><Drop label="Arrow list" />
          </div>
          <div className="flex h-[26px] shrink-0 items-center gap-1 border-r border-[#a0a0a0] pr-0.5 text-[10px] text-[#484848]">
            <span className="-mr-[3px] flex"><Grip /></span>
            {["M1", "M5", "M15", "M30", "H1", "H4", "D1", "W1", "MN"].map((p) => <Btn key={p} label={p} icon={p} on={p === "H1"} />)}
          </div>
        </div>
      </header>

      <main className="flex border-t border-[#a0a0a0]">
        <aside className="w-[260px] shrink-0 border-r-2 border-b border-[#8c8c8c]">
          <MarketWatch />
          <Navigator />
        </aside>
        <div className="min-w-0 flex-1">
          <div className="relative overflow-hidden border-t-2 border-l border-t-[#8c8c8c] border-l-[#404040] bg-black pr-px">
            <Chart />
            <TradePanel />
          </div>
          <div className="mt-[2px] flex border-t border-black pl-[5px]">
            <Tabs items={chartTabs} active="XAUUSD,H1" pad="px-[11px]" />
            <div className="ml-auto flex items-center gap-3.5 pr-2">
              <button aria-label="Scroll left"><svg width="4" height="7"><path d="M4 0v7L0 3.500z" fill="#909090" /></svg></button>
              <button aria-label="Scroll right"><svg width="4" height="7"><path d="M0 0v7l4-3.500z" /></svg></button>
            </div>
          </div>
        </div>
      </main>

      <Terminal />

      <footer className="flex flex-1 items-center border-t border-[#8c8c8c] pt-[3px]">
        <span className="min-w-0 flex-1 pl-px">For Help, press F1</span>
        <span className="flex h-[18px] w-[117px] items-center border-l border-[#a8a8a8] pl-[5px]">Default</span>
        <span className="h-[18px] w-[102px] border-l border-[#a8a8a8]" />
        {[0, 1, 2, 3, 4].map((i) => <span key={i} className="h-[18px] w-[69px] border-l border-[#a8a8a8]" />)}
        <span className="flex h-[18px] w-[129px] items-center gap-1 border-l border-[#a8a8a8] pl-1">
          <svg width="24" height="12" shapeRendering="crispEdges" aria-hidden="true">
            {[0, 1, 2, 3, 4, 5, 6, 7].map((i) => <rect key={i} x={i * 3} y="0" width="2" height={i < 5 ? 11 : 12} fill={i < 4 ? "#a02818" : "#6c8c10"} />)}
          </svg>
          43/0 kb
        </span>
      </footer>
    </div>
  );
}
